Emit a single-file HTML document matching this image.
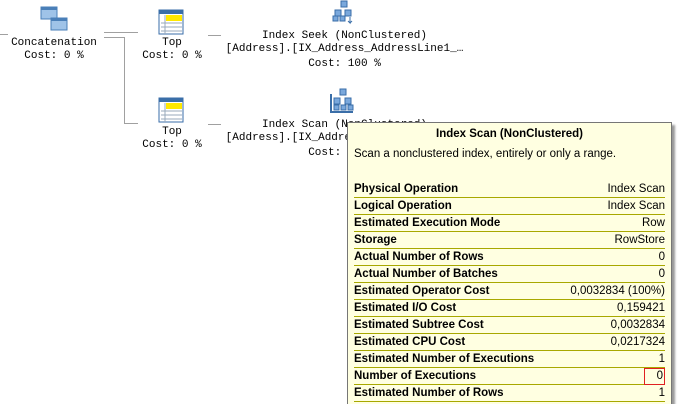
<!DOCTYPE html>
<html style="overflow:hidden;width:683px;height:404px"><head><style>
body{margin:0;width:683px;height:404px;background:#fff;position:relative;overflow:hidden;font-family:"Liberation Mono",monospace;font-size:11px;color:#000}
.t{position:absolute;white-space:pre;text-align:center;line-height:13px}
.l{position:absolute;background:#a0a0a0}
.tip{position:absolute;left:347px;top:122px;width:323px;height:300px;background:#ffffe1;border:1px solid #767676;box-shadow:3px 3px 2px #999;font-family:"Liberation Sans",sans-serif;font-size:11.5px}
.row{position:absolute;left:6px;width:311px;height:16px;border-bottom:1px solid #a8a800;line-height:16px}
.row b{position:absolute;left:0}
.row span{position:absolute;right:0}
</style></head><body>
<div class="l" style="left:0;top:34px;width:8px;height:1px"></div>
<div class="l" style="left:104px;top:32px;width:34px;height:1px"></div>
<div class="l" style="left:104px;top:37px;width:21px;height:1px"></div>
<div class="l" style="left:124px;top:37px;width:1px;height:87px"></div>
<div class="l" style="left:124px;top:123px;width:14px;height:1px"></div>
<div class="l" style="left:208px;top:35px;width:13px;height:1px"></div>
<div class="l" style="left:208px;top:124px;width:13px;height:1px"></div>
<svg style="position:absolute;left:40px;top:6px" width="28" height="28"><rect x="1" y="1" width="16" height="12" fill="#9fc3e8" stroke="#4a7fb8"/><rect x="11" y="12" width="16" height="12" fill="#9fc3e8" stroke="#4a7fb8"/><rect x="1" y="1" width="16" height="3" fill="#4a7fb8"/><rect x="11" y="12" width="16" height="3" fill="#4a7fb8"/></svg>
<svg style="position:absolute;left:158px;top:9px" width="26" height="26"><rect x="1" y="1" width="24" height="24" fill="#fff" stroke="#3a6ea8"/><rect x="1" y="1" width="24" height="4" fill="#3a6ea8"/><rect x="8" y="6" width="16" height="6" fill="#ffe800"/><path d="M3 14h21M3 18h21M3 22h21M7 6v19" stroke="#9ab" fill="none"/></svg>
<svg style="position:absolute;left:158px;top:97px" width="26" height="26"><rect x="1" y="1" width="24" height="24" fill="#fff" stroke="#3a6ea8"/><rect x="1" y="1" width="24" height="4" fill="#3a6ea8"/><rect x="8" y="6" width="16" height="6" fill="#ffe800"/><path d="M3 14h21M3 18h21M3 22h21M7 6v19" stroke="#9ab" fill="none"/></svg>
<svg style="position:absolute;left:332px;top:0px" width="24" height="26"><rect x="9" y="1" width="6" height="6" fill="#7aa8dc" stroke="#3a6ea8"/><rect x="3" y="10" width="6" height="6" fill="#7aa8dc" stroke="#3a6ea8"/><rect x="13" y="10" width="6" height="6" fill="#7aa8dc" stroke="#3a6ea8"/><rect x="1" y="16" width="5" height="5" fill="#7aa8dc" stroke="#3a6ea8"/><rect x="8" y="16" width="5" height="5" fill="#7aa8dc" stroke="#3a6ea8"/><path d="M18 17v6l-2-2M18 23l2-2" stroke="#3a6ea8" fill="none"/></svg>
<svg style="position:absolute;left:330px;top:88px" width="26" height="26"><path d="M1 6v18h22" stroke="#3a6ea8" stroke-width="2" fill="none"/><rect x="10" y="1" width="6" height="6" fill="#7aa8dc" stroke="#3a6ea8"/><rect x="4" y="10" width="6" height="6" fill="#7aa8dc" stroke="#3a6ea8"/><rect x="15" y="10" width="6" height="6" fill="#7aa8dc" stroke="#3a6ea8"/><rect x="4" y="17" width="5" height="5" fill="#7aa8dc" stroke="#3a6ea8"/><rect x="11" y="17" width="5" height="5" fill="#7aa8dc" stroke="#3a6ea8"/><rect x="18" y="17" width="5" height="5" fill="#7aa8dc" stroke="#3a6ea8"/></svg>
<div class="t" style="left:0;width:108px;top:37px">Concatenation
Cost: 0 %</div>
<div class="t" style="left:131px;width:82px;top:37px">Top
Cost: 0 %</div>
<div class="t" style="left:131px;width:82px;top:126px">Top
Cost: 0 %</div>
<div class="t" style="left:222px;width:245px;top:30px">Index Seek (NonClustered)
[Address].[IX_Address_AddressLine1_…</div>
<div class="t" style="left:222px;width:245px;top:58px">Cost: 100 %</div>
<div class="t" style="left:222px;width:245px;top:119px">Index Scan (NonClustered)
[Address].[IX_Address_AddressLine1_…</div>
<div class="t" style="left:222px;width:245px;top:147px">Cost: 100 %</div>
<div class="tip">
<div style="position:absolute;top:5px;width:100%;text-align:center;font-weight:bold">Index Scan (NonClustered)</div>
<div style="position:absolute;top:25px;left:6px">Scan a nonclustered index, entirely or only a range.</div>
<div class="row" style="top:58px"><b>Physical Operation</b><span>Index Scan</span></div>
<div class="row" style="top:75px"><b>Logical Operation</b><span>Index Scan</span></div>
<div class="row" style="top:92px"><b>Estimated Execution Mode</b><span>Row</span></div>
<div class="row" style="top:109px"><b>Storage</b><span>RowStore</span></div>
<div class="row" style="top:126px"><b>Actual Number of Rows</b><span>0</span></div>
<div class="row" style="top:143px"><b>Actual Number of Batches</b><span>0</span></div>
<div class="row" style="top:160px"><b>Estimated Operator Cost</b><span>0,0032834 (100%)</span></div>
<div class="row" style="top:177px"><b>Estimated I/O Cost</b><span>0,159421</span></div>
<div class="row" style="top:194px"><b>Estimated Subtree Cost</b><span>0,0032834</span></div>
<div class="row" style="top:211px"><b>Estimated CPU Cost</b><span>0,0217324</span></div>
<div class="row" style="top:228px"><b>Estimated Number of Executions</b><span>1</span></div>
<div class="row" style="top:245px"><b>Number of Executions</b><span style="border:1px solid #e02020;width:18px;text-align:right;padding-right:1px;height:15px;line-height:15px;top:0">0</span></div>
<div class="row" style="top:262px"><b>Estimated Number of Rows</b><span>1</span></div>
</div>
</body></html>
